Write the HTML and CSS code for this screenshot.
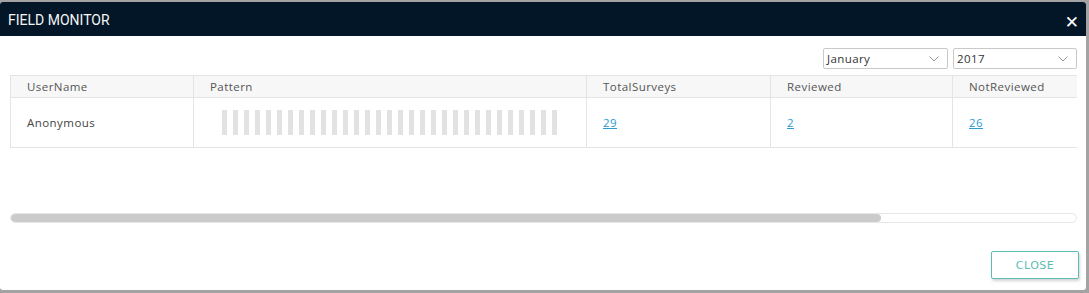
FILE: index.html
```html
<!DOCTYPE html>
<html lang="en">
<head>
    <meta charset="UTF-8">
    <title>Field Monitor</title>
    <link rel="stylesheet" href="styles.css">
</head>
<body>
  <div class="modal">
    <div class="modal-header">
      <span class="modal-title">FIELD MONITOR</span>
      <button class="bt-x">&#x2715;</button>
    </div>
    <div class="modal-body">
      <div class="filters">
        <div class="picker picker-month">
          <span>January</span>
          <svg width="10" height="6" viewBox="0 0 10 6"><path d="M0.5 0.5 L5 5 L9.5 0.5" fill="none" stroke="#999" stroke-width="1"/></svg>
        </div>
        <div class="picker picker-year">
          <span>2017</span>
          <svg width="10" height="6" viewBox="0 0 10 6"><path d="M0.5 0.5 L5 5 L9.5 0.5" fill="none" stroke="#999" stroke-width="1"/></svg>
        </div>
      </div>
      <div class="grid-wrap">
        <table class="grid">
          <thead>
            <tr>
              <th class="c-user">UserName</th>
              <th class="c-pattern">Pattern</th>
              <th class="c-total">TotalSurveys</th>
              <th class="c-rev">Reviewed</th>
              <th class="c-notrev">NotReviewed</th>
            </tr>
          </thead>
          <tbody>
            <tr>
              <td>Anonymous</td>
              <td><div class="pattern" id="pattern"></div></td>
              <td><a href="#">29</a></td>
              <td><a href="#">2</a></td>
              <td><a href="#">26</a></td>
            </tr>
          </tbody>
        </table>
      </div>
      <div class="scroll-track"><div class="scroll-thumb"></div></div>
      <div class="footer">
        <button class="bt-close">CLOSE</button>
      </div>
    </div>
  </div>
  <script>
    const pattern = document.getElementById("pattern");
    for (let i = 0; i < 31; i++) {
      const bar = document.createElement("span");
      bar.className = "bar";
      pattern.append(bar);
    }
  </script>
</body>
</html>
```

FILE: styles.css
```css
html, body {
    margin: 0;
    padding: 0;
}

body {
    background-color: #a3a3a3;
    height: 293px;
    overflow: hidden;
    font-family: "Open Sans", sans-serif;
}

.modal {
    margin-top: 2px;
    width: 1086px;
    height: 288px;
    background-color: #fff;
    border-radius: 3px;
    overflow: hidden;
}

.modal-header {
    height: 34px;
    background-color: #021627;
    display: flex;
    align-items: center;
    justify-content: space-between;
    padding: 0 7px 0 8px;
}

.modal-title {
    font-family: "Roboto", sans-serif;
    font-size: 14px;
    color: #f4f4f4;
    padding-top: 1px;
}

.bt-x {
    background: none;
    border: none;
    color: #fff;
    font-size: 17px;
    font-weight: bold;
    padding: 0;
    margin-top: 5px;
    font-family: "DejaVu Sans", sans-serif;
}

.modal-body {
    padding: 12px 9px 0 10px;
}

.filters {
    display: flex;
    justify-content: flex-end;
    gap: 5px;
}

.picker {
    height: 19px;
    border: 1px solid #c9c9c9;
    border-radius: 2px;
    display: flex;
    align-items: center;
    justify-content: space-between;
    padding: 0 8px 0 3px;
    font-size: 11.5px;
    letter-spacing: 0.4px;
    color: #333;
}

.picker-month {
    width: 112px;
}

.picker-year {
    width: 111px;
}

.grid-wrap {
    margin-top: 6px;
    width: 1067px;
    overflow: hidden;
}

.grid {
    border-collapse: collapse;
    width: 1310px;
    font-size: 11.5px;
    letter-spacing: 0.45px;
    color: #444;
}

.grid th, .grid td {
    text-align: left;
    font-weight: normal;
    padding: 0 0 0 16px;
    border: 1px solid #e4e4e4;
}

.grid th {
    height: 21px;
    background-color: #f7f7f7;
    color: #555;
}

.grid td {
    height: 49px;
}

.c-user { width: 166px; }
.c-pattern { width: 376px; }
.c-total { width: 167px; }
.c-rev { width: 165px; }

.grid a {
    color: #2d9ad6;
}

.pattern {
    display: flex;
    gap: 6px;
    padding-left: 12px;
}

.bar {
    width: 5px;
    height: 25px;
    background-color: #e2e2e2;
}

.scroll-track {
    margin-top: 65px;
    width: 1065px;
    height: 8px;
    border: 1px solid #e6e6e6;
    border-radius: 5px;
    overflow: hidden;
}

.scroll-thumb {
    width: 870px;
    height: 8px;
    background-color: #cbcbcb;
    border-radius: 5px;
}

.footer {
    display: flex;
    justify-content: flex-end;
    margin-top: 28px;
}

.bt-close {
    width: 88px;
    height: 28px;
    background-color: #fff;
    border: 1px solid #5cbdb5;
    border-radius: 2px;
    color: #5cbdb5;
    font-family: "DejaVu Sans", sans-serif;
    font-size: 11px;
    letter-spacing: 0.5px;
    box-shadow: 1px 2px 3px rgba(0, 0, 0, 0.18);
    margin-right: -2px;
}
```
